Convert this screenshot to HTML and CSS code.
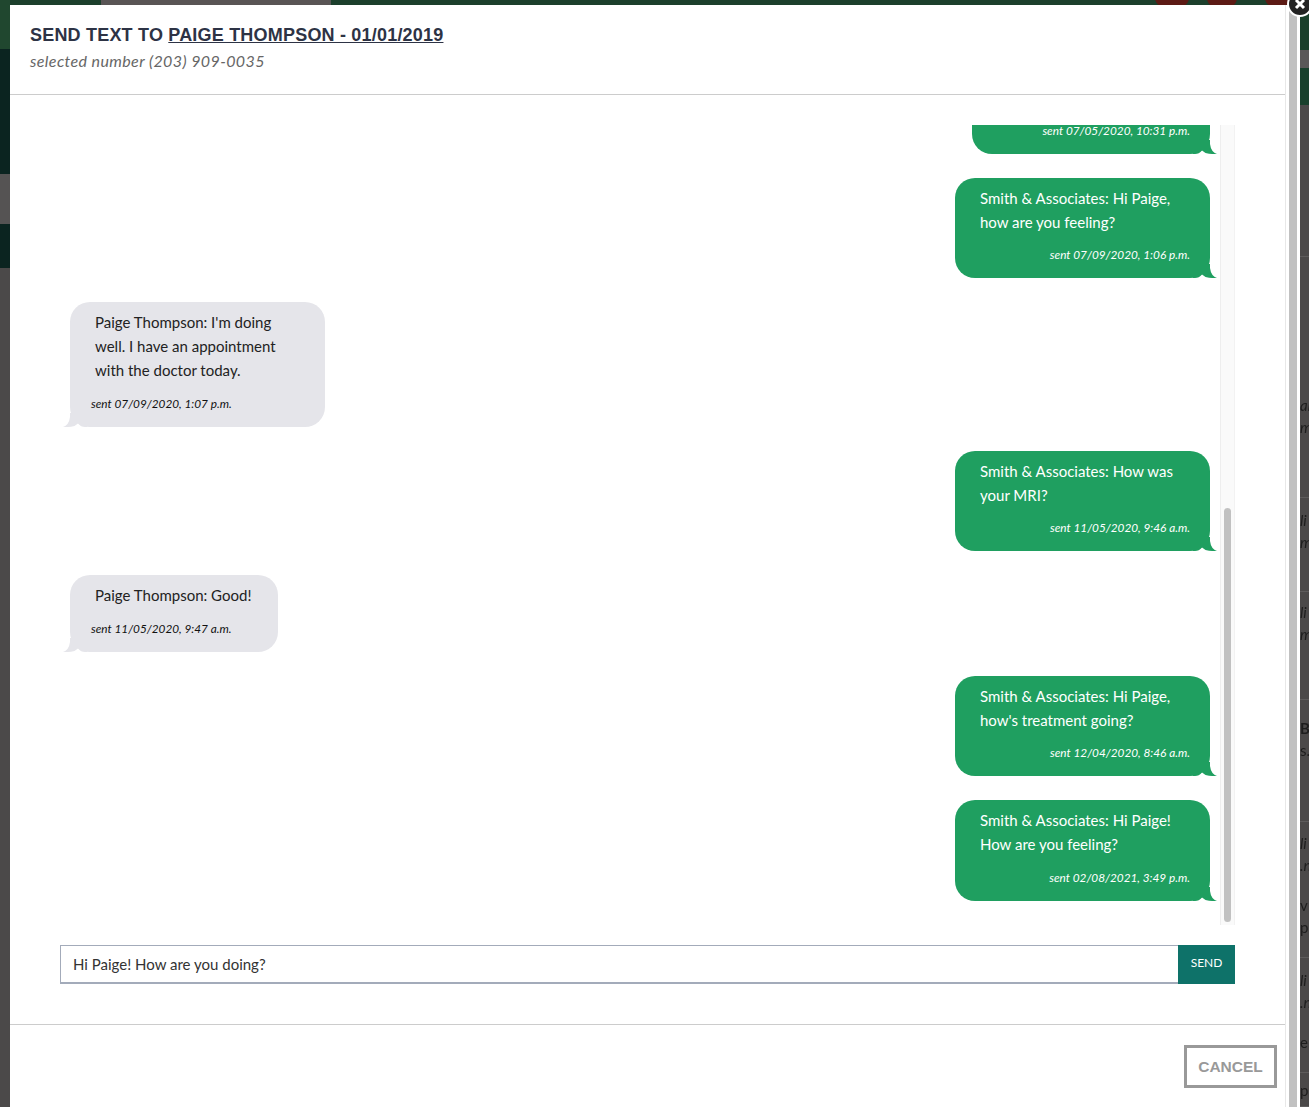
FILE: index.html
```html
<!DOCTYPE html>
<html lang="en">
<head>
  <meta charset="UTF-8" />
  <title>Send Text</title>
  <link rel="stylesheet" href="styles.css">
</head>
<body>
  <div class="page-top">
    <span class="top-tab"></span>
    <span class="badge badge-one"></span>
    <span class="badge badge-two"></span>
    <span class="badge badge-three"></span>
  </div>
  <div class="page-left">
    <div class="left-green"></div>
    <div class="left-dark"></div>
    <div class="left-gray"></div>
    <div class="left-dark2"></div>
  </div>
  <div class="page-right">
    <div class="right-green"></div>
    <div class="right-gray"></div>
    <div class="right-green2"></div>
    <div class="row row-a"></div>
    <div class="row row-b"><i>an</i><i>m</i></div>
    <div class="row row-c"><i>li</i><i>m</i></div>
    <div class="row row-d"><i>li</i><i>m</i></div>
    <div class="row row-e"><b>B</b><span>s.</span></div>
    <div class="row row-f"><i>li</i><i>.n</i><span class="row-gap">v</span><span>p</span></div>
    <div class="row row-g"><i>li</i><i>.n</i><span class="row-gap">er</span></div>
    <div class="row row-h"><span>pe</span></div>
  </div>

  <div class="modal">
    <div class="modal-main">
      <header class="modal-head">
        <h2>SEND TEXT TO <u>PAIGE THOMPSON - 01/01/2019</u></h2>
        <p>selected number (203) 909-0035</p>
      </header>

      <div class="modal-body">
        <div class="chat">
          <div class="messages">
            <div class="bubble out clipped">
              <div class="sent">sent 07/05/2020, 10:31 p.m.</div>
              <svg class="tail" width="24" height="14" viewBox="0 0 24 14"><path d="M0 14H2Q6 14 9 10.5Q12 13.5 16 13.8Q21 14.2 24 14Q18 12 17 4V0H0Z"/></svg>
            </div>
            <div class="bubble out">
              <div class="text">Smith &amp; Associates: Hi Paige,<br>how are you feeling?</div>
              <div class="sent">sent 07/09/2020, 1:06 p.m.</div>
              <svg class="tail" width="24" height="14" viewBox="0 0 24 14"><path d="M0 14H2Q6 14 9 10.5Q12 13.5 16 13.8Q21 14.2 24 14Q18 12 17 4V0H0Z"/></svg>
            </div>
            <div class="bubble in">
              <div class="text">Paige Thompson: I'm doing<br>well. I have an appointment<br>with the doctor today.</div>
              <div class="sent">sent 07/09/2020, 1:07 p.m.</div>
              <svg class="tail" width="24" height="14" viewBox="0 0 24 14"><path d="M0 14H2Q6 14 9 10.5Q12 13.5 16 13.8Q21 14.2 24 14Q18 12 17 4V0H0Z"/></svg>
            </div>
            <div class="bubble out">
              <div class="text">Smith &amp; Associates: How was<br>your MRI?</div>
              <div class="sent">sent 11/05/2020, 9:46 a.m.</div>
              <svg class="tail" width="24" height="14" viewBox="0 0 24 14"><path d="M0 14H2Q6 14 9 10.5Q12 13.5 16 13.8Q21 14.2 24 14Q18 12 17 4V0H0Z"/></svg>
            </div>
            <div class="bubble in short">
              <div class="text">Paige Thompson: Good!</div>
              <div class="sent">sent 11/05/2020, 9:47 a.m.</div>
              <svg class="tail" width="24" height="14" viewBox="0 0 24 14"><path d="M0 14H2Q6 14 9 10.5Q12 13.5 16 13.8Q21 14.2 24 14Q18 12 17 4V0H0Z"/></svg>
            </div>
            <div class="bubble out">
              <div class="text">Smith &amp; Associates: Hi Paige,<br>how's treatment going?</div>
              <div class="sent">sent 12/04/2020, 8:46 a.m.</div>
              <svg class="tail" width="24" height="14" viewBox="0 0 24 14"><path d="M0 14H2Q6 14 9 10.5Q12 13.5 16 13.8Q21 14.2 24 14Q18 12 17 4V0H0Z"/></svg>
            </div>
            <div class="bubble out last">
              <div class="text">Smith &amp; Associates: Hi Paige!<br>How are you feeling?</div>
              <div class="sent">sent 02/08/2021, 3:49 p.m.</div>
              <svg class="tail" width="24" height="14" viewBox="0 0 24 14"><path d="M0 14H2Q6 14 9 10.5Q12 13.5 16 13.8Q21 14.2 24 14Q18 12 17 4V0H0Z"/></svg>
            </div>
          </div>
          <div class="chat-scroll"><div class="chat-thumb"></div></div>
        </div>

        <form class="send-form">
          <input type="text" value="Hi Paige! How are you doing?" />
          <button type="button">SEND</button>
        </form>
      </div>

      <footer class="modal-foot">
        <button type="button" class="cancel">CANCEL</button>
      </footer>
    </div>
    <div class="modal-scroll"><div class="modal-thumb"></div></div>
    <div class="close">
      <svg width="12" height="12" viewBox="0 0 12 12"><path d="M2 2L10 10M10 2L2 10"/></svg>
    </div>
  </div>
</body>
</html>
```
FILE: styles.css
```css
* {
  margin: 0;
  padding: 0;
  box-sizing: border-box;
}

html, body {
  height: 100%;
  overflow: hidden;
}

body {
  background: #4b4949;
  font-family: Lato, "Open Sans", sans-serif;
  color: #222;
}

/* dimmed page behind the modal */
.page-top {
  position: fixed;
  top: 0;
  left: 0;
  right: 0;
  height: 6px;
  background: #1c3f2c;
}

.top-tab {
  position: absolute;
  left: 101px;
  width: 230px;
  height: 5px;
  background: #595555;
}

.badge {
  position: absolute;
  top: -14px;
  width: 34px;
  height: 24px;
  border-radius: 50%;
  background: #5c1a14;
}

.badge-one { left: 1155px; }
.badge-two { left: 1207px; width: 30px; }
.badge-three { left: 1265px; }

.page-left {
  position: fixed;
  top: 0;
  left: 0;
  width: 10px;
}

.left-green { height: 49px; background: #20472f; }
.left-dark { height: 125px; background: #0b2420; }
.left-gray { height: 50px; background: #555353; }
.left-dark2 { height: 44px; background: #0b2420; }

.page-right {
  position: fixed;
  top: 0;
  left: 1300px;
  width: 9px;
  overflow: hidden;
  font-size: 15px;
  line-height: 22px;
  color: #1d1d1d;
  white-space: nowrap;
}

.page-right i, .page-right span, .page-right b {
  display: block;
}

.right-green { height: 50px; background: #1a3f2b; }
.right-gray { height: 18px; background: #5a5858; }
.right-green2 { height: 37px; background: #18402c; }

.row { border-bottom: 1px solid #5e5c5c; }
.row-a { height: 152px; }
.row-b { height: 241px; padding-top: 137px; }
.row-c { height: 94px; padding-top: 11px; }
.row-d { height: 108px; padding-top: 9px; }
.row-e { height: 122px; padding-top: 17px; }
.row-f { height: 136px; padding-top: 10px; }
.row-g { height: 115px; padding-top: 11px; }
.row-h { height: 34px; padding-top: 6px; }
.row-gap { margin-top: 18px; }

/* modal */
.modal {
  position: fixed;
  top: 5px;
  left: 10px;
  width: 1290px;
  bottom: 0;
  display: flex;
}

.modal-main {
  flex: 1;
  background: #fff;
  min-width: 0;
}

.modal-head {
  height: 90px;
  padding: 19px 20px 0;
  border-bottom: 1px solid #ccc;
}

.modal-head h2 {
  font-family: "Liberation Sans", Arial, sans-serif;
  font-size: 18px;
  line-height: 22px;
  font-weight: bold;
  letter-spacing: 0.2px;
  color: #2d3345;
}

.modal-head p {
  margin-top: 4px;
  font-size: 16px;
  line-height: 22px;
  font-style: italic;
  letter-spacing: 0.4px;
  color: #666;
}

.modal-body {
  padding: 30px 50px 40px;
}

.chat {
  display: flex;
  height: 800px;
}

.messages {
  flex: 1;
  display: flex;
  flex-direction: column;
  justify-content: flex-end;
  gap: 24px;
  padding: 0 10px 24px;
  overflow: hidden;
}

.bubble {
  position: relative;
  flex: none;
  width: 255px;
  padding: 8px 20px 13px 25px;
  border-radius: 20px;
  font-size: 15px;
  line-height: 24px;
}

.bubble .text {
  margin-bottom: 11px;
}

.sent {
  font-size: 11.8px;
  line-height: 20px;
  font-style: italic;
}

.tail {
  position: absolute;
  right: -7px;
  bottom: 0;
}

.out {
  align-self: flex-end;
  background: #1f9f60;
  color: #fff;
}

.out .sent { text-align: right; }
.out .tail { fill: #1f9f60; }
.out.last .text { margin-bottom: 12px; }

.clipped {
  width: 238px;
  padding-top: 21px;
}

.in {
  align-self: flex-start;
  background: #e5e5ea;
  color: #222;
}

.in .text { margin-bottom: 12px; }
.in .sent { margin-left: -4px; color: #111; }
.in .tail { right: auto; left: -7px; fill: #e5e5ea; transform: scaleX(-1); }

.short {
  width: fit-content;
  padding-right: 27px;
}

.chat-scroll {
  flex: none;
  width: 15px;
  background: #fafafa;
  border-left: 1px solid #eee;
  border-right: 1px solid #f2f2f2;
  padding: 383px 3px 3px;
}

.chat-thumb {
  height: 100%;
  background: #c1c1c1;
  border-radius: 4px;
}

.send-form {
  display: flex;
  height: 39px;
  margin-top: 20px;
}

.send-form input {
  flex: 1;
  border: 1px solid #a3abba;
  border-right: none;
  border-bottom-width: 2px;
  padding: 0 12px;
  font-family: Lato, "Open Sans", sans-serif;
  font-size: 15px;
  color: #333;
  background: #fff;
  outline: none;
}

.send-form button {
  width: 57px;
  border: none;
  padding-bottom: 5px;
  background: #0e7269;
  color: #fff;
  font-family: Lato, "Open Sans", sans-serif;
  font-size: 12px;
}

.modal-foot {
  display: flex;
  justify-content: flex-end;
  padding: 20px 8px 0 0;
  border-top: 1px solid #ccc;
}

.cancel {
  width: 93px;
  height: 43px;
  background: #fff;
  border: 3px solid #999;
  color: #999;
  font-family: "Liberation Sans", Arial, sans-serif;
  font-size: 15.5px;
  font-weight: bold;
}

.modal-scroll {
  flex: none;
  width: 15px;
  padding: 0 3px 0 3px;
  background: #fff;
  border-left: 1px solid #e8e8e8;
}

.modal-thumb {
  height: 100%;
  background: #c1c1c1;
}

.close {
  position: absolute;
  top: -14px;
  left: 1277px;
  width: 26px;
  height: 26px;
  display: flex;
  align-items: center;
  justify-content: center;
  background: #222;
  border: 2px solid #fff;
  border-radius: 50%;
}

.close path {
  fill: none;
  stroke: #fff;
  stroke-width: 3px;
}
```
